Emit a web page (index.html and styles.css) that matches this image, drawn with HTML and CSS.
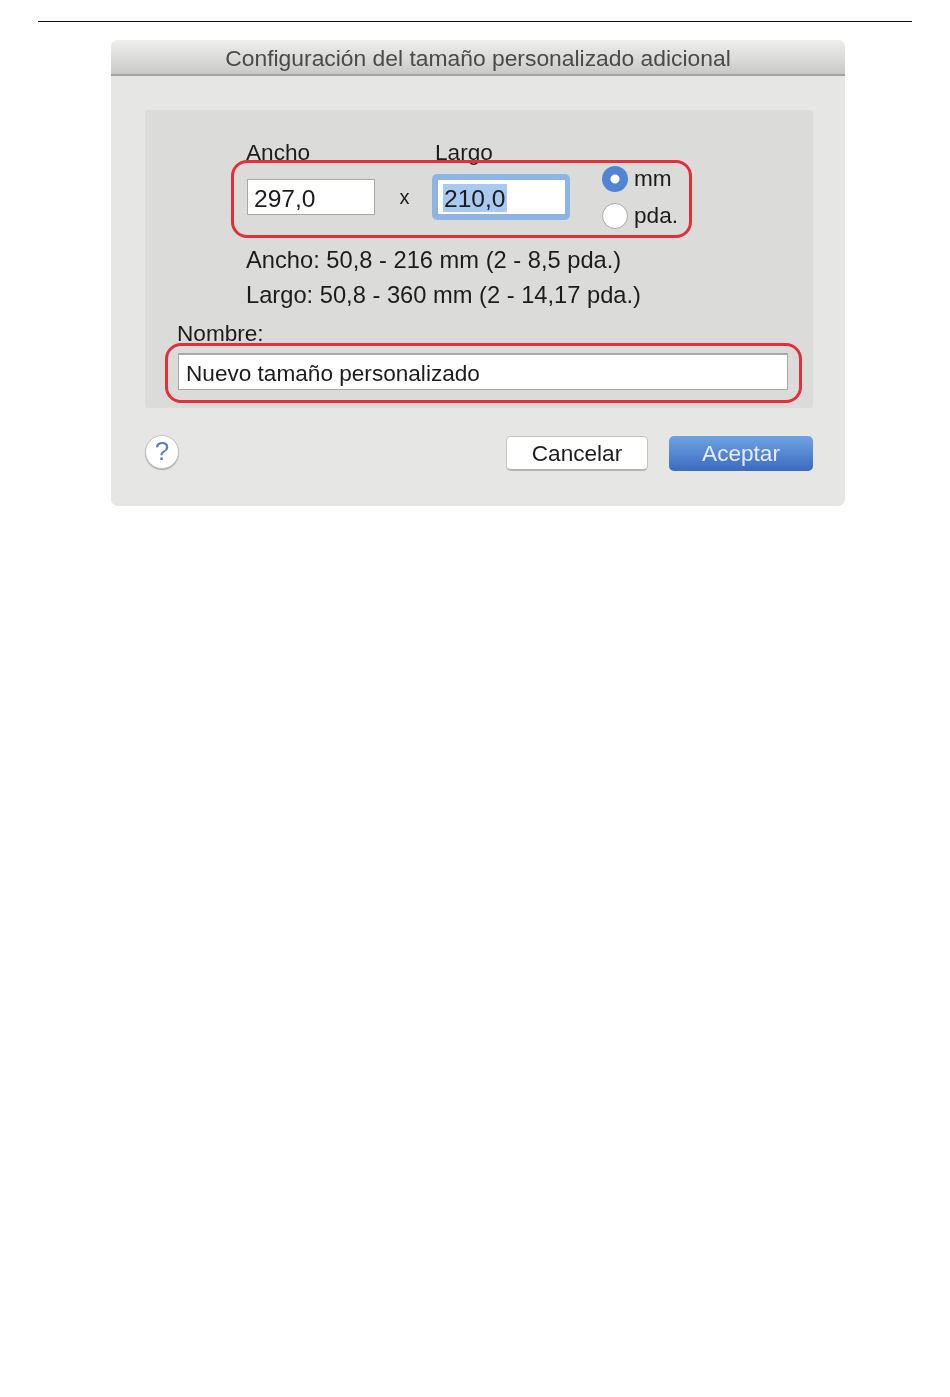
FILE: index.html
```html
<!DOCTYPE html>
<html lang="es">
<head>
    <meta charset="UTF-8">
    <title>Configuración del tamaño personalizado adicional</title>
    <link rel="stylesheet" href="styles.css">
</head>
<body>
    <hr class="rule">
    <div class="dialog">
        <div class="titlebar">Configuración del tamaño personalizado adicional</div>
        <div class="panel">
            <div class="size-labels">
                <span class="size-label">Ancho</span>
                <span class="size-label">Largo</span>
            </div>
            <div class="frame frame-size">
                <div class="field field-width">297,0</div>
                <span class="times">x</span>
                <div class="focus-ring">
                    <div class="field field-height"><span class="selected">210,0</span></div>
                </div>
                <div class="units">
                    <div class="unit"><span class="radio radio-on"></span>mm</div>
                    <div class="unit"><span class="radio"></span>pda.</div>
                </div>
            </div>
            <div class="limits">
                <p>Ancho: 50,8 - 216 mm (2 - 8,5 pda.)</p>
                <p>Largo: 50,8 - 360 mm (2 - 14,17 pda.)</p>
            </div>
            <div class="name-label">Nombre:</div>
            <div class="frame frame-name">
                <div class="field field-name">Nuevo tamaño personalizado</div>
            </div>
        </div>
        <div class="footer">
            <div class="help">?</div>
            <div class="btn btn-cancel">Cancelar</div>
            <div class="btn btn-ok">Aceptar</div>
        </div>
    </div>
</body>
</html>
```

FILE: styles.css
```css
* {
    margin: 0;
    padding: 0;
    box-sizing: border-box;
}
body {
    background: #fff;
    font-family: "Liberation Sans", Arial, sans-serif;
    font-size: 22.6px;
    color: #1c1c1c;
}
.rule {
    border: 0;
    height: 1px;
    background: #111;
    margin: 21px 38px 0;
}
.dialog {
    width: 734px;
    height: 466px;
    margin: 18px 0 0 111px;
    background: #e6e6e4;
    border-radius: 7px;
    filter: blur(0.4px);
}
.titlebar {
    height: 36px;
    line-height: 36px;
    text-align: center;
    font-size: 22.85px;
    color: #4a4a4a;
    background: linear-gradient(#efefed, #c9c9c7);
    border-bottom: 2px solid #a3a3a1;
    border-radius: 7px 7px 0 0;
}
.panel {
    width: 668px;
    height: 298px;
    margin: 34px 0 0 34px;
    padding: 34px 0 0 20px;
    background: #dbdbd9;
    border-radius: 3px;
}
.size-labels {
    display: flex;
    height: 16px;
    line-height: 18px;
    padding-left: 81px;
}
.size-label {
    width: 189px;
}
.frame {
    position: relative;
    border: 3px solid #e0303c;
    border-radius: 16px;
}
.frame-size {
    display: flex;
    align-items: center;
    width: 461px;
    height: 78px;
    margin-left: 66px;
    padding-left: 13px;
}
.field {
    background: #fff;
    border: 1px solid #a8a8a6;
    padding-left: 6px;
}
.field-width {
    width: 128px;
    height: 36px;
    margin-bottom: 4px;
    line-height: 37px;
    font-size: 24.6px;
}
.times {
    width: 57px;
    margin-bottom: 4px;
    padding-left: 2px;
    text-align: center;
    font-size: 20px;
}
.focus-ring {
    width: 138px;
    height: 46px;
    margin-bottom: 4px;
    padding: 6px 5px 6px 6px;
    background: #8db5e4;
    border-radius: 5px;
}
.field-height {
    height: 34px;
    padding-top: 4px;
    padding-left: 5px;
    border: 0;
}
.selected {
    display: block;
    width: 64px;
    height: 28px;
    line-height: 30px;
    padding-left: 1px;
    font-size: 24.6px;
    background: #a9c9ee;
}
.units {
    margin: 0 0 3px 32px;
}
.unit {
    display: flex;
    align-items: center;
    gap: 6px;
    height: 37px;
}
.radio {
    width: 26px;
    height: 26px;
    background: #fff;
    border: 1px solid #aaa;
    border-radius: 50%;
}
.radio-on {
    background: radial-gradient(circle, #fff 4px, #5284d4 5px);
    border: 0;
}
.limits {
    margin: 5px 0 0 81px;
    line-height: 35px;
    font-size: 23.7px;
}
.name-label {
    height: 20px;
    line-height: 22px;
    margin: 10px 0 0 12px;
}
.frame-name {
    width: 637px;
    height: 60px;
    padding: 7px 0 0 10px;
}
.field-name {
    width: 610px;
    height: 37px;
    line-height: 38px;
    padding-left: 7px;
    border-top: 2px solid #a8a8a6;
}
.footer {
    display: flex;
    align-items: flex-start;
    gap: 21px;
    margin-top: 28px;
    padding: 0 32px 0 34px;
}
.help {
    width: 34px;
    height: 34px;
    margin: -1px auto 0 0;
    line-height: 31px;
    text-align: center;
    font-size: 26px;
    color: #5a7ec0;
    background: #fff;
    border: 1px solid #c4c4c2;
    border-radius: 50%;
    box-shadow: 0 1px 1px #aaa;
}
.btn {
    height: 35px;
    line-height: 35px;
    text-align: center;
    border-radius: 5px;
}
.btn-cancel {
    width: 142px;
    background: #fff;
    border: 1px solid #c4c4c2;
    border-bottom: 2px solid #b4b4b2;
    line-height: 33px;
}
.btn-ok {
    width: 144px;
    color: #e6edf9;
    background: linear-gradient(#6fa3e4, #3d6bbd);
}
```
